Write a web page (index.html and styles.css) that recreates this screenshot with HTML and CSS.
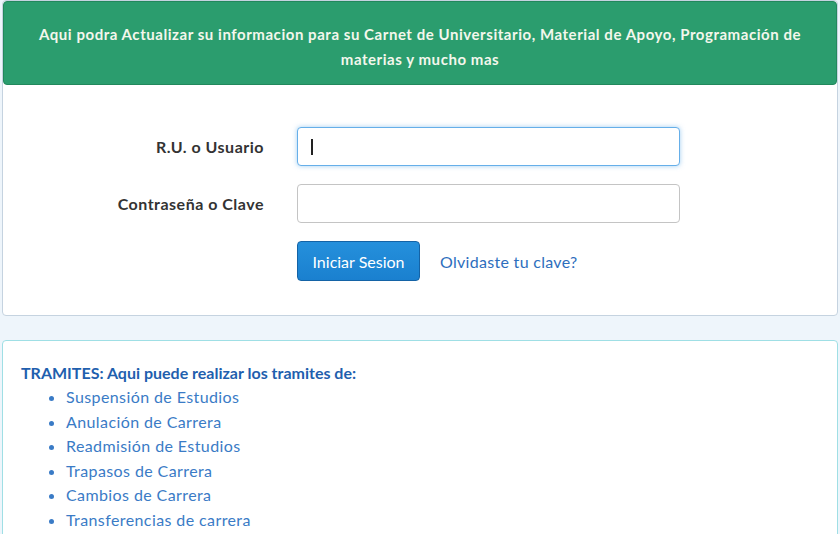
FILE: index.html
```html
<!DOCTYPE html>
<html lang="es">
<head>
<meta charset="utf-8">
<title>Login</title>
<link rel="stylesheet" href="styles.css">
</head>
<body>
<div class="panel login">
  <div class="panel-heading">Aqui podra Actualizar su informacion para su Carnet de Universitario, Material de Apoyo, Programación de materias y mucho mas</div>
  <form class="form">
    <label class="label" for="ru">R.U. o Usuario</label>
    <div class="field focused"><span class="caret"></span></div>
    <label class="label" for="pw">Contraseña o Clave</label>
    <div class="field"></div>
    <div></div>
    <div class="actions">
      <span class="btn">Iniciar Sesion</span>
      <a class="link" href="#">Olvidaste tu clave?</a>
    </div>
  </form>
</div>
<div class="panel tramites">
  <div class="title">TRAMITES: Aqui puede realizar los tramites de:</div>
  <ul class="list">
    <li>Suspensión de Estudios</li>
    <li>Anulación de Carrera</li>
    <li>Readmisión de Estudios</li>
    <li>Trapasos de Carrera</li>
    <li>Cambios de Carrera</li>
    <li>Transferencias de carrera</li>
  </ul>
</div>
</body>
</html>
```
FILE: styles.css
```css
html, body {
  margin: 0;
  padding: 0;
  background: #eef5fb;
  font-family: "Lato", "Open Sans", sans-serif;
  overflow: hidden;
}
.panel {
  margin: 0 2px;
  background: #fff;
  border-radius: 4px;
  box-sizing: border-box;
}
.login {
  border: 1px solid #c5d3e0;
  height: 316px;
}
.panel-heading {
  height: 84px;
  box-sizing: border-box;
  background: #2b9d6e;
  border: 1px solid #22885c;
  border-radius: 4px;
  color: #f3f7ec;
  font-weight: 700;
  font-size: 15px;
  line-height: 25px;
  text-align: center;
  padding: 20px 16px 0;
  letter-spacing: 0.55px;
}
.form {
  display: grid;
  grid-template-columns: 261px 383px;
  column-gap: 33px;
  row-gap: 18px;
  margin-top: 42px;
  align-items: center;
}
.label {
  text-align: right;
  font-weight: 700;
  font-size: 16px;
  letter-spacing: 0.5px;
  color: #333;
}
.field {
  height: 39px;
  box-sizing: border-box;
  border: 1px solid #c4c4c4;
  border-radius: 4px;
  background: #fff;
  display: flex;
  align-items: center;
  padding-left: 13px;
}
.field.focused {
  border-color: #66afe9;
  box-shadow: 0 0 5px rgba(102, 175, 233, 0.6);
}
.caret {
  width: 2px;
  height: 16px;
  background: #222;
}
.actions {
  display: flex;
  align-items: center;
  gap: 20px;
}
.btn {
  width: 123px;
  height: 40px;
  box-sizing: border-box;
  background: linear-gradient(#2590dc, #1a80cf);
  border: 1px solid #1463a6;
  border-radius: 4px;
  color: #fff;
  font-size: 16px;
  display: flex;
  align-items: center;
  justify-content: center;
}
.link {
  color: #2d6ebd;
  font-size: 16px;
  letter-spacing: 0.3px;
  text-decoration: none;
}
.tramites {
  margin-top: 24px;
  border: 1px solid #9fdfe5;
  height: 220px;
  padding: 22px 18px 0;
}
.title {
  color: #1f5fae;
  font-weight: 700;
  font-size: 16px;
  line-height: 20px;
}
.list {
  margin: 2px 0 0;
  padding-left: 45px;
  color: #3a7bc6;
  font-size: 16px;
  letter-spacing: 0.4px;
  line-height: 24.6px;
}
.list li::marker {
  color: #3a7bc6;
}
```
